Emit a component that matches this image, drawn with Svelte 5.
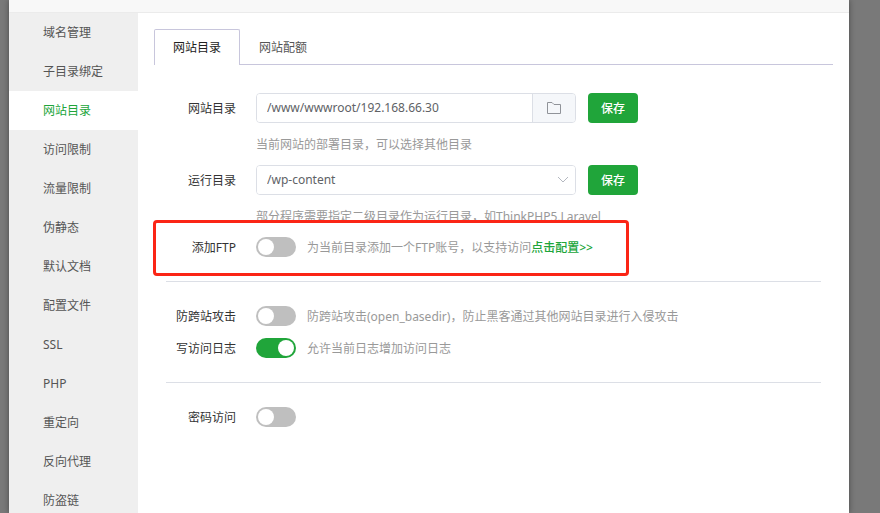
<script lang="ts">
	const menu = [
		'域名管理',
		'子目录绑定',
		'网站目录',
		'访问限制',
		'流量限制',
		'伪静态',
		'默认文档',
		'配置文件',
		'SSL',
		'PHP',
		'重定向',
		'反向代理',
		'防盗链'
	];
	const tabs = ['网站目录', '网站配额'];

	let activeMenu = $state('网站目录');
	let activeTab = $state('网站目录');
	let path = $state('/www/wwwroot/192.168.66.30');
	let runDir = $state('/wp-content');
	let ftp = $state(false);
	let basedir = $state(false);
	let accessLog = $state(true);
	let password = $state(false);
</script>

<div class="overlay">
	<div class="dialog" role="dialog" aria-label="网站目录">
		<header class="dialog-header"></header>
		<div class="dialog-body">
			<nav class="menu">
				{#each menu as item}
					<button
						type="button"
						class="menu-item"
						class:active={item === activeMenu}
						onclick={() => (activeMenu = item)}
					>
						{item}
					</button>
				{/each}
			</nav>

			<main class="content">
				<div class="tabs" role="tablist">
					{#each tabs as tab}
						<button
							type="button"
							class="tab"
							class:active={tab === activeTab}
							role="tab"
							aria-selected={tab === activeTab}
							onclick={() => (activeTab = tab)}
						>
							{tab}
						</button>
					{/each}
				</div>

				<form class="form" onsubmit={(e) => e.preventDefault()}>
					<div class="row">
						<label class="label" for="path">网站目录</label>
						<div class="field">
							<input id="path" class="path-input" type="text" bind:value={path} />
							<button type="button" class="folder-btn" aria-label="选择目录">
								<svg viewBox="0 0 16 14" fill="none" stroke="currentColor">
									<path d="M1.5 12.5V1.5h4.5l2 2h6.5v9z" />
								</svg>
							</button>
						</div>
						<button type="submit" class="save-btn">保存</button>
					</div>
					<p class="help">当前网站的部署目录，可以选择其他目录</p>

					<div class="row">
						<label class="label" for="run-dir">运行目录</label>
						<div class="field">
							<select id="run-dir" class="dir-select" bind:value={runDir}>
								<option value="/">/</option>
								<option value="/wp-content">/wp-content</option>
							</select>
							<svg class="arrow" viewBox="0 0 12 8" fill="none" stroke="currentColor">
								<path d="M1 1l5 5 5-5" />
							</svg>
						</div>
						<button type="submit" class="save-btn">保存</button>
					</div>
					<p class="help">部分程序需要指定二级目录作为运行目录，如ThinkPHP5,Laravel</p>

					<div class="row switch-row marked">
						<label class="label" for="ftp">添加FTP</label>
						<input id="ftp" class="switch" type="checkbox" role="switch" bind:checked={ftp} />
						<span class="tip">
							为当前目录添加一个FTP账号，以支持访问<a href="#ftp">点击配置&gt;&gt;</a>
						</span>
					</div>

					<hr />

					<div class="row switch-row">
						<label class="label" for="basedir">防跨站攻击</label>
						<input id="basedir" class="switch" type="checkbox" role="switch" bind:checked={basedir} />
						<span class="tip">防跨站攻击(open_basedir)，防止黑客通过其他网站目录进行入侵攻击</span>
					</div>
					<div class="row switch-row">
						<label class="label" for="access-log">写访问日志</label>
						<input id="access-log" class="switch" type="checkbox" role="switch" bind:checked={accessLog} />
						<span class="tip">允许当前日志增加访问日志</span>
					</div>

					<hr />

					<div class="row switch-row">
						<label class="label" for="password">密码访问</label>
						<input id="password" class="switch" type="checkbox" role="switch" bind:checked={password} />
					</div>
				</form>
			</main>
		</div>
	</div>
</div>

<style>
	:global(body) {
		margin: 0;
	}

	.overlay,
	.overlay :global(*) {
		box-sizing: border-box;
	}

	.overlay {
		height: 100vh;
		padding: 0 31px 0 9px;
		overflow: hidden;
		background: #797979;
		font-family: 'Noto Sans', 'Noto Sans CJK SC', sans-serif;
		font-size: 12px;
		line-height: 20px;
		color: #555;
	}

	button,
	input,
	select {
		margin: 0;
		font: inherit;
		color: inherit;
	}

	button {
		padding: 0;
		border: none;
		background: none;
		cursor: pointer;
	}

	.dialog {
		display: flex;
		flex-direction: column;
		height: 100%;
		background: #fff;
		box-shadow: 0 0 6px rgba(0, 0, 0, 0.4);
	}

	.dialog-header {
		flex: none;
		height: 13px;
		border-bottom: 1px solid #ebebeb;
		background: #f8f8f8;
	}

	.dialog-body {
		display: flex;
		flex: 1;
		min-height: 0;
	}

	.menu {
		flex: none;
		width: 129px;
		overflow: hidden;
		background: #efefef;
	}

	.menu-item {
		display: block;
		width: 100%;
		height: 39px;
		padding-left: 34px;
		text-align: left;
	}

	.menu-item.active {
		background: #fff;
		color: #20a53a;
	}

	.content {
		flex: 1;
		min-width: 0;
		padding: 16px 16px 0;
	}

	.tabs {
		display: flex;
		height: 36px;
		border-bottom: 1px solid #c8c6dc;
	}

	.tab {
		height: 36px;
		padding: 0 18px;
		border: 1px solid transparent;
		border-bottom: none;
		border-radius: 2px 2px 0 0;
	}

	.tab.active {
		border-color: #c8c6dc;
		background: #fff;
		color: #222;
	}

	.form {
		padding: 28px 12px 0;
	}

	.row {
		display: flex;
		align-items: center;
	}

	.label {
		flex: none;
		width: 70px;
		margin-right: 20px;
		padding-top: 2px;
		text-align: right;
		white-space: nowrap;
		color: #333;
	}

	.field {
		position: relative;
		display: flex;
		width: 320px;
		height: 30px;
		margin-right: 12px;
		overflow: hidden;
		border: 1px solid #dcdfe6;
		border-radius: 4px;
		color: #606266;
	}

	.path-input,
	.dir-select {
		flex: 1;
		min-width: 0;
		padding: 0 10px;
		border: none;
		outline: none;
		background: #fff;
	}

	.dir-select {
		appearance: none;
	}

	.folder-btn {
		display: flex;
		align-items: center;
		justify-content: center;
		width: 43px;
		border-left: 1px solid #dcdfe6;
		background: #f5f7fa;
		color: #909399;
	}

	.folder-btn svg {
		width: 16px;
		height: 14px;
	}

	.arrow {
		position: absolute;
		top: 10px;
		right: 6px;
		width: 12px;
		height: 8px;
		color: #b4b8c0;
		pointer-events: none;
	}

	.save-btn {
		width: 50px;
		height: 30px;
		padding-top: 2px;
		border-radius: 4px;
		background: #20a53a;
		color: #fff;
		font-weight: 500;
	}

	.help {
		margin: 12px 0 10px 90px;
		color: #999;
	}

	.switch-row {
		position: relative;
		height: 20px;
		margin-bottom: 12px;
	}

	.switch {
		appearance: none;
		flex: none;
		width: 40px;
		height: 20px;
		margin-right: 11px;
		padding: 2px;
		border-radius: 10px;
		background: #bfbfbf;
		cursor: pointer;
	}

	.switch::before {
		content: '';
		display: block;
		width: 16px;
		height: 16px;
		border-radius: 50%;
		background: #fff;
	}

	.switch:checked {
		background: #20a53a;
	}

	.switch:checked::before {
		margin-left: auto;
	}

	.tip {
		padding-top: 2px;
		white-space: nowrap;
		color: #999;
	}

	.tip a {
		color: #20a53a;
		font-weight: 500;
		text-decoration: none;
	}

	/* red frame drawn over the FTP row */
	.marked::after {
		content: '';
		position: absolute;
		top: -17px;
		left: -13px;
		box-sizing: border-box;
		width: 476px;
		height: 56px;
		border: 3px solid #fb2516;
		border-radius: 4px;
		pointer-events: none;
	}

	hr {
		margin: 24px 0;
		border: none;
		border-top: 1px solid #dcdfe6;
	}
</style>
